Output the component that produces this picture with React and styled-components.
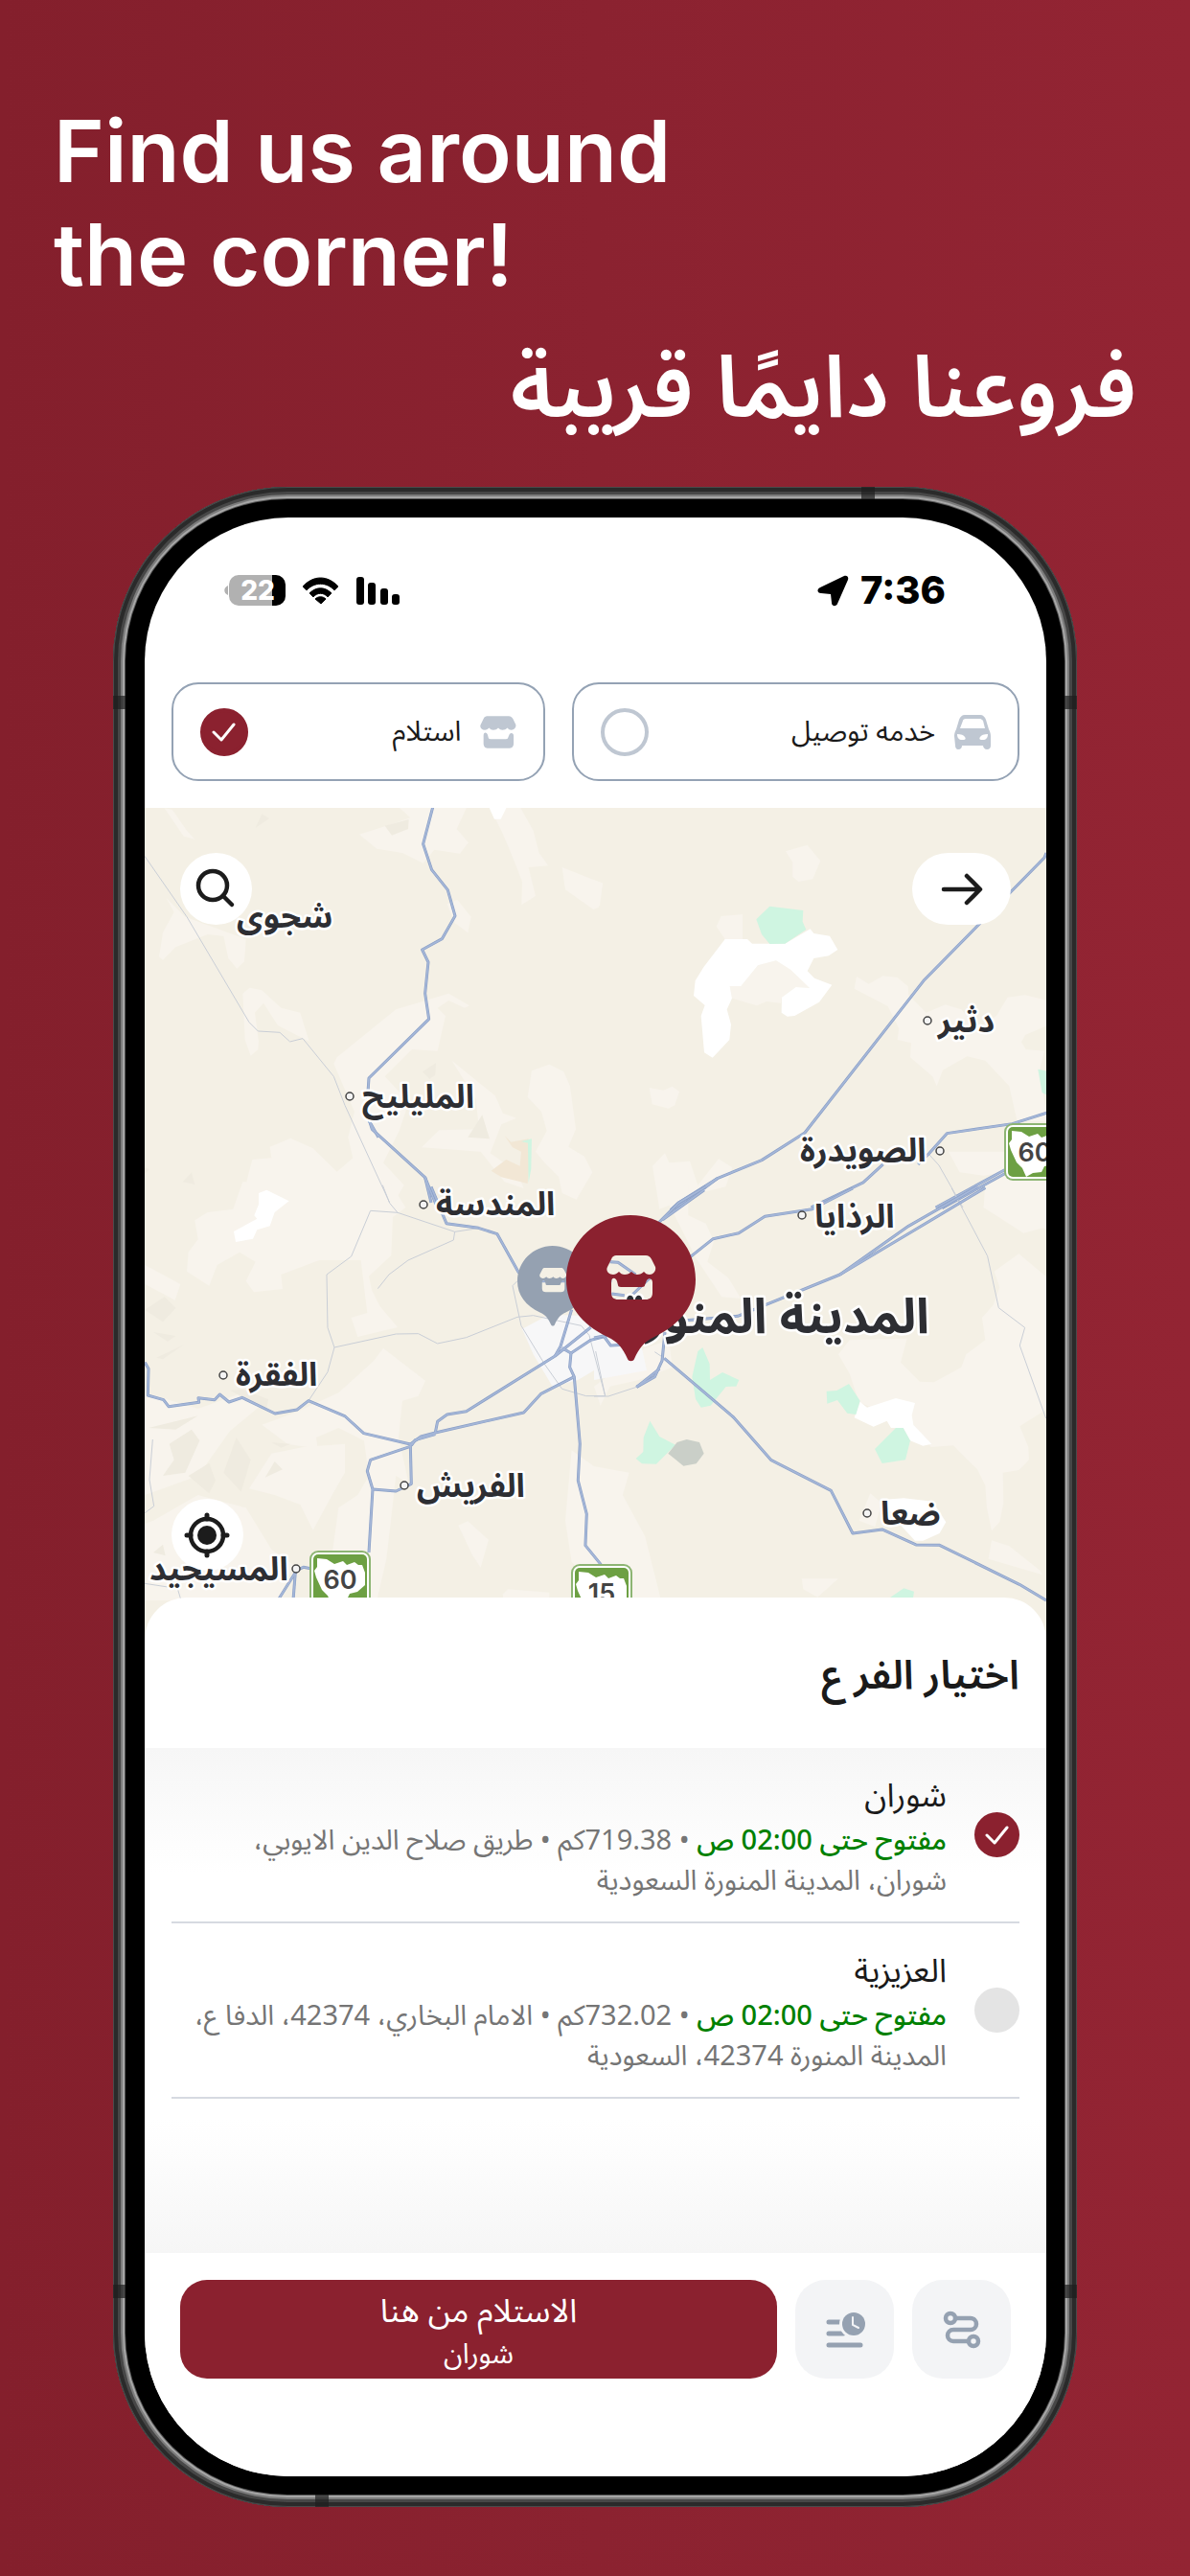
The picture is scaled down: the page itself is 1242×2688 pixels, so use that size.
import React, { useState } from 'react';
import styled, { createGlobalStyle } from 'styled-components';

const arabic = '"Noto Sans Arabic", "Noto Sans", "DejaVu Sans", sans-serif';

const GlobalStyle = createGlobalStyle`
  * {
    box-sizing: border-box;
  }

  body {
    margin: 0;
    background: #8b2230;
  }

  button, input {
    font: inherit;
  }
`;

const BRANCHES = [
  {
    id: 'shoran',
    name: 'شوران',
    open: 'مفتوح حتى 02:00 ص',
    distance: '719.38كم',
    address: 'طريق صلاح الدين الايوبي، شوران، المدينة المنورة السعودية',
  },
  {
    id: 'aziziyah',
    name: 'العزيزية',
    open: 'مفتوح حتى 02:00 ص',
    distance: '732.02كم',
    address: 'الامام البخاري، 42374، الدفا ع، المدينة المنورة 42374، السعودية',
  },
];

// Place names with the left edge of the label and its town dot
const PLACES = [
  { name: 'شجوى', x: 96, y: 125 },
  { name: 'المليليح', x: 227, y: 313, dot: [214, 301] },
  { name: 'المندسة', x: 304, y: 425, dot: [291, 414] },
  { name: 'الفقرة', x: 95, y: 603, dot: [82, 592] },
  { name: 'الفريش', x: 284, y: 719, dot: [271, 707] },
  { name: 'المسيجيد', x: 5, y: 806, dot: [158, 794] },
  { name: 'دثير', x: 828, y: 234, dot: [817, 222] },
  { name: 'الصويدرة', x: 684, y: 369, dot: [830, 358] },
  { name: 'الرذايا', x: 699, y: 438, dot: [686, 425] },
  { name: 'ضعا', x: 768, y: 748, dot: [754, 736] },
];

const SHIELDS = [
  { road: '60', x: 172, y: 775 },
  { road: '15', x: 445, y: 789 },
  { road: '60', x: 897, y: 329 },
];

// The map is kept as four sheets, each at three units to the pixel
const SHEETS = [
  {
    id: 'nw',
    at: '-11 -3',
    sand: [
      '95,10 120,15 165,80 190,107 155,98',
      '820,0 1045,0 1010,75 1047,118 1020,152 940,140 905,182 840,150 760,137 705,92 790,65 865,40',
      '1108,0 1205,0 1250,80 1268,150 1297,190 1235,195 1257,285 1213,313 1215,240 1180,150 1150,80',
      '1340,195 1467,245 1455,320 1438,327 1350,265',
      '100,290 160,350 350,420 345,490 322,512 295,480 280,410 230,405 130,445 90,485 78,475 90,400 125,335',
      '340,590 362,572 400,580 460,635 520,650 548,740 450,690 405,620 378,650 390,740 388,765 365,785 347,735',
      '635,790 820,640 985,590 1050,628 1035,635 985,612 950,635 975,660 950,770 870,765 785,850 860,930 830,1020 780,1120 845,1190 800,1270 400,1265 340,1225 370,1110 430,1105 425,1070 490,1043 560,1075 635,1148 685,1105 670,1040 690,960 625,810',
      '995,800 1130,910 1155,965 1197,980 1150,1000 1115,1090 1200,1150 1220,1200 1160,1180 1085,1085 900,1072 955,1018 1080,1015 1070,920',
      '1245,832 1300,812 1345,835 1365,880 1383,1015 1360,1070 1410,1100 1435,1150 1385,1235 1340,1215 1330,1165 1285,1120 1257,1085 1292,1020 1275,960 1232,915',
      '980,310 1012,296 1055,350 1045,400 1005,370',
    ],
    rock: [
      '380,72 400,28 423,42',
      '785,65 860,45 858,75 807,95',
      '903,835 945,808 943,845 925,858',
      '152,1180 180,1150 190,1188',
      '1045,1040 1090,970 1113,1045',
      '33,1135 48,1140 33,1155',
    ],
    white: ['1108,0 1170,0 1148,44 1128,44'],
    clay: ['1160,1035 1180,1055 1235,1045 1240,1100 1232,1185 1150,1165 1118,1145 1165,1110 1208,1130 1212,1085 1185,1072'],
    green: ['1212,1053 1245,1045 1243,1140 1235,1182 1233,1058'],
    paths: [
      '33,160 165,350 360,680 388,708 456,712 488,741 528,731 625,850 660,940 800,1245',
    ],
    roads: [
      '937,0 905,122 932,203 982,266 1005,347 964,419 902,453 921,492 911,590 923,670 735,855 728,960 745,1015 911,1166 945,1250',
      '728,975 765,1040',
      '911,1166 930,1245',
    ],
  },
  {
    id: 'ne',
    at: '469 -3',
    sand: [
      '600,145 668,125 709,175 685,232 640,240 622,225 622,180',
      '383,380 398,348 465,342 465,420 410,420',
      '432,605 425,567 460,567 513,502 570,487 615,515 675,573 632,570 588,602 585,620 540,615 510,628',
      '815,575 822,537 860,560 905,535 950,540 983,568 985,595 1040,650 1100,625 1150,640 1200,700 1260,660 1295,602 1350,595 1420,612 1420,690 1350,720 1338,742 1352,765 1410,770 1395,830 1420,990 1325,990 1300,880 1225,800 1168,787 1092,830 1073,880 1060,850 990,790 993,745 950,735 955,700 920,630',
      '173,885 217,893 245,881 267,897 253,940 233,950 182,937',
      '183,1130 222,1090 235,1120 300,1115 325,1190 390,1108 433,1135 412,1195 330,1215 205,1265',
      '1110,1085 1290,1085 1283,1150 1220,1160 1145,1150',
      '1230,1190 1420,1090 1420,1330 1220,1260',
      '0,235 27,245 18,315 0,325',
    ],
    rock: [],
    white: [
      '410,420 480,420 495,434 598,434 677,388 688,402 738,410 763,453 735,472 688,480 668,520 690,542 745,563 705,617 628,660 605,662 587,650 588,602 632,570 675,573 615,515 570,487 513,502 460,567 425,567 432,605 416,640 429,687 424,735 371,791 345,775 335,660 347,627 312,597 317,550 343,508',
    ],
    clay: [],
    green: [
      '508,358 550,317 655,330 653,365 664,390 598,434 550,435 525,405',
      '1390,827 1420,833 1420,910 1403,900',
    ],
    paths: ['1050,1095 1080,1128 1155,1260'],
    roads: [
      '1416,150 1410,165 1032,550 660,1026 525,1112 388,1168 265,1245 240,1268',
      '388,1168 290,1240 245,1265',
      '1420,963 1310,998 1105,1028 1050,1090 1015,1125',
      '905,1125 843,1182 680,1260',
      '1290,1140 1070,1260',
      '1290,1152 1090,1262',
    ],
  },
  {
    id: 'sw',
    at: '-11 397',
    sand: [
      '340,-20 800,-20 850,60 810,90 805,210 735,275 745,320 770,370 825,435 700,465 680,405 730,390 710,225 580,225 460,270 465,315 375,325 350,290 380,230 330,200 260,240 235,305 165,260 170,200 200,160 190,100 230,75 310,65',
      '780,500 912,602 890,650 840,665 828,780 860,925 820,900 790,1160 760,1290 600,1290 640,1000 700,960 735,900 720,790 640,750 570,780 575,815 480,800 400,740 510,700 640,640 750,540',
      '360,940 430,830 530,810 660,800 660,890 620,960 560,1070 520,990 440,960',
      '34,1050 60,1040 200,960 350,1000 430,1130 500,1180 450,1290 34,1290',
      '34,240 145,300 128,350 34,300',
      '34,640 200,690 340,640 420,660 300,760 200,900 34,960',
      '1015,1055 1045,1042 1110,1100 1085,1187 1060,1150',
      '1350,1040 1370,820 1440,870 1550,890 1530,960 1600,1090 1650,1290 1490,1290 1370,1170',
      '1155,1270 1170,1255 1300,1265 1300,1290 1155,1290',
    ],
    rock: [
      '34,380 95,340 130,375 90,418 40,385',
      '60,450 130,462 105,480',
      '70,530 155,490 90,535',
      '45,750 200,712 130,755',
      '110,800 180,755 205,790 160,890 90,900 125,850',
      '170,900 235,860 255,915 235,955',
      '320,780 365,850 335,950 280,890',
      '430,795 490,800 460,812',
      '410,905 440,855 465,880',
      '300,632 340,630 420,660 415,690 350,660',
      '60,1140 90,1115 98,1150',
    ],
    white: ['390,15 415,5 485,40 440,75 425,118 385,130 372,158 318,168 312,135 385,95 376,85 390,50'],
    city: ['1215,440 1300,395 1430,400 1520,430 1600,560 1510,595 1440,570 1390,600 1310,620 1250,520'],
    clay: [],
    green: [],
    paths: [
      '778,-10 800,46 825,76 1004,136 1000,162 858,225 798,270 763,314',
      '1004,136 1078,125',
      '825,76 740,70 680,213 603,270 606,436 627,498 606,575 546,665',
      '627,498 820,456 890,455 950,486 1040,467 1200,403 1250,398 1400,430 1425,460 1475,650',
      '1200,290 1185,305 1212,430 1285,550 1340,628 1415,650 1475,650',
      '58,786 48,912 62,995 34,1016',
      '33,1237 105,1248 135,1250 147,1290',
    ],
    roads: [
      '34,545 45,565 43,648 92,662 108,683 203,670 201,656 252,662 268,645 297,669 338,655 441,705 510,693 546,665 661,714 719,767 865,801',
      '930,-5 978,110 1078,124 1137,143 1203,262 1260,290 1495,290',
      '865,801 898,777 943,765 1220,702 1273,644 1378,590',
      '868,805 880,788 943,770',
      '943,765 950,730 980,708 1040,698 1318,525 1430,435',
      '1318,525 1335,495 1370,380',
      '1340,500 1368,516 1430,475 1480,462',
      '1368,516 1364,560 1378,590 1396,800 1390,915 1417,1020 1413,1118 1457,1172 1470,1190',
      '865,801 868,925 820,948 747,942',
      '865,808 740,850 730,885 747,942 735,1140',
      '450,1290 510,1195 530,1186 560,1192',
      '498,1290 505,1200',
    ],
  },
  {
    id: 'se',
    at: '469 397',
    sand: [
      '205,0 295,-10 295,85 350,110 375,165 355,230 420,280 460,345 400,340 320,220 240,60',
      '765,520 800,475 980,470 960,545 1020,605 1065,607 1150,560 1165,520 1225,475 1215,405 1250,365 1270,310 1253,260 1330,205 1420,280 1420,690 1333,745 1360,810 1362,850 1330,882 1280,890 1282,985 1270,1045 1245,1072 1230,1000 1225,930 1200,880 1125,805 1055,810 1000,740 830,670 800,580',
      '1225,-20 1420,-20 1420,120 1345,140 1220,60',
      '1245,1102 1300,1120 1395,1195 1404,1210 1235,1160',
      '650,1222 765,1222 700,1280 655,1255',
      '865,955 900,985 880,1060 830,1040',
      '160,500 235,475 245,560 140,600 50,620 20,680 0,620',
    ],
    rock: [],
    white: [
      '833,668 855,686 945,657 1005,672 995,710 1000,740 1057,800 1030,806 990,790 968,750 930,750 917,728 875,746 815,718',
      '900,975 970,970 1060,980 1102,1045 1082,1080 1030,1103 1005,1103 965,1060',
    ],
    city: ['0,470 100,440 150,500 165,570 0,600'],
    clay: [],
    green: [
      '340,498 362,550 363,600 402,576 454,600 445,620 413,621 365,680 335,686 318,660 307,590 325,510',
      '175,728 205,777 255,803 195,863 150,862 131,846 154,825 155,780',
      '728,635 760,633 798,612 833,665 820,708 793,704 762,663 730,674',
      '945,750 968,750 990,790 975,850 902,861 879,816',
      '928,1290 928,1280 970,1252 1002,1262 998,1290',
    ],
    grey: ['232,830 260,795 290,786 330,795 344,830 320,862 280,869'],
    paths: [
      '1120,0 1232,212 1267,374 1349,436 1333,492 1415,720',
      '190,512 220,532',
      '133,622 45,651 0,651',
      '5,510 35,650',
    ],
    roads: [
      '350,-5 265,45 205,105 150,200',
      '345,5 215,98',
      '810,0 683,65 535,88 453,140 373,158 305,212 170,285 120,333',
      '1200,-5 985,118 770,270 450,400 270,415',
      '1225,-2 995,136 770,270',
      '220,532 437,717 555,851 742,946 810,1080 902,1068 1008,1116 1082,1117 1332,1240 1416,1290',
      '222,450 213,540 190,590 133,622',
      '205,565 133,622',
      '0,468 30,462 52,492 90,490',
      '50,230 75,232 130,270',
      '55,330 95,335',
    ],
  },
];

const storeAwning = 'M10 0h31c3 0 4 1 6 4l4 8c1 4-2 8-6 8-3 0-4-1-6-3-2 2-4 3-7 3-2 0-4-1-6-3-2 2-4 3-7 3s-4-1-6-3c-2 2-4 3-6 3-5 0-8-4-6-8l4-8c1-3 3-4 5-4z';
const storeCounter = 'M5 28c0-6 5-5 6-1l1 4c0 1 1 2 3 2h22c2 0 3-1 3-2l2-5c2-3 6-2 6 2v11c0 5-3 7-7 7H12c-4 0-7-2-7-7z';

const StoreIcon = () => (
  <svg width="38" height="36" viewBox="0 0 52 46" fill="#bfc7d2" aria-hidden="true">
    <path d={storeAwning} />
    <path d={storeCounter} />
  </svg>
);

const CarIcon = () => (
  <svg width="38" height="36" viewBox="0 0 38 36" aria-hidden="true">
    <path
      fill="#bfc7d2"
      fillRule="evenodd"
      d="M11 0h16c3 0 5 2 6 5l3 10c1 2 2 4 2 7v10c0 2-1 4-4 4-2 0-4-2-4-4H8c0 2-1 4-4 4-2 0-3-2-3-4L0 22c0-3 1-5 2-7L5 5c1-3 3-5 6-5zm1 4c-2 0-3 1-3 2L6 14h26l-2-8c-1-1-2-2-3-2zM3 20c0 4 2 6 5 6h2c2 0 2-2 1-3-1-2-4-3-8-3zm32 0c-4 0-7 1-8 3-1 1-1 3 1 3h2c3 0 5-2 5-6z"
    />
  </svg>
);

const CheckIcon = () => (
  <svg width="26" height="20" viewBox="0 0 26 20" fill="none" aria-hidden="true">
    <path d="M2 10l8 8L23 2" stroke="#fff" strokeWidth="3" strokeLinecap="round" strokeLinejoin="round" />
  </svg>
);

const Pin = ({ fill }) => (
  <svg width="100%" viewBox="0 0 135 153" aria-hidden="true">
    <path
      fill={fill}
      fillRule="evenodd"
      d={`M67 0C30 0 0 30 0 67c0 27 16 47 43 60 11 5 16 12 21 23 1 3 6 3 7 0 5-11 10-18 21-23 27-13 43-33 43-60C135 30 104 0 67 0z
        M52 42h31c3 0 4 1 6 4l4 8c1 4-2 8-6 8-3 0-4-1-6-3-2 2-4 3-7 3-2 0-4-1-6-3-2 2-4 3-7 3s-4-1-6-3c-2 2-4 3-6 3-5 0-8-4-6-8l4-8c1-3 3-4 5-4z
        M47 70c0-6 5-5 6-1l1 4c0 1 1 2 3 2h22c2 0 3-1 3-2l2-5c2-3 6-2 6 2v11c0 5-3 7-7 7H54c-4 0-7-2-7-7z`}
    />
  </svg>
);

const shapes = (list, fill) => (list || []).map((points) => (
  <polygon key={points} points={points} fill={fill} />
));

const lines = (list, stroke, width) => list.map((points) => (
  <polyline key={points} points={points} fill="none" stroke={stroke} strokeWidth={width} strokeLinejoin="round" />
));

const Terrain = () => (
  <MapLayer viewBox="0 0 941 884" preserveAspectRatio="xMidYMin slice" aria-hidden="true">
    {SHEETS.map((s) => (
      <g key={s.id} transform={`translate(${s.at}) scale(0.3333)`}>
        {shapes(s.sand, '#f8f4ed')}
        {shapes(s.rock, '#efebe0')}
        {shapes(s.city, '#f7f7f8')}
        {shapes(s.white, '#ffffff')}
        {shapes(s.clay, '#f2e7d5')}
        {shapes(s.green, '#cff5e1')}
        {shapes(s.grey, '#cacfc8')}
      </g>
    ))}
    {SHEETS.map((s) => (
      <g key={s.id} transform={`translate(${s.at}) scale(0.3333)`}>
        {lines(s.paths, '#c9ced6', 3)}
        {lines(s.roads, '#8a9fc6', 9)}
        {lines(s.roads, '#a5b7d8', 5)}
      </g>
    ))}
  </MapLayer>
);

const Labels = () => (
  <MapLayer viewBox="0 0 941 884" preserveAspectRatio="xMidYMin slice">
    {SHIELDS.map((s) => (
      <g key={`${s.x}-${s.y}`} transform={`translate(${s.x} ${s.y})`}>
        <rect width="64" height="60" rx="9" fill="#8db573" />
        <rect x="2" y="2" width="60" height="56" rx="7" fill="#fff" />
        <rect x="4" y="4" width="56" height="52" rx="5" fill="#6da043" />
        <path d="M8 8l10 1 8 5 9-3 4 4 8-3 4 3 4 0 3 8 0 13-8 7-8 2-3 6-9 1-7 4-4-9-6-6-6-13-2-7 3-4z" fill="#fff" />
        <ShieldText x="32" y="40">{s.road}</ShieldText>
      </g>
    ))}
    {PLACES.map((p) => (
      <g key={p.name}>
        {p.dot && <circle cx={p.dot[0]} cy={p.dot[1]} r="4" fill="#f4f4f4" stroke="#444" strokeWidth="1.5" />}
        <PlaceText x={p.x} y={p.y}>{p.name}</PlaceText>
      </g>
    ))}
    <PlaceText x="819" y="548" $city>المدينة المنورة</PlaceText>
  </MapLayer>
);

const StatusIcons = () => (
  <svg width="184" height="34" viewBox="0 0 184 34" aria-hidden="true">
    <path d="M4 12c-5 2-5 8 0 10z" fill="#b1b1b1" />
    <path d="M50 1H15A10 10 0 0 0 5 11v12a10 10 0 0 0 10 10h35z" fill="#b1b1b1" />
    <path d="M50 1h4a10 10 0 0 1 10 10v12a10 10 0 0 1-10 10h-4z" fill="#000" />
    <BatteryText x="35" y="27">22</BatteryText>
    <path d="M82 13c11-12 26-12 37 0l-4 4c-8-9-21-9-29 0z" stroke="#000" strokeLinejoin="round" />
    <path d="M89 20c7-7 16-7 23 0l-4 4c-4-5-11-5-15 0z" stroke="#000" strokeLinejoin="round" />
    <path d="M95 26c3-3 8-3 11 0l-5 5z" stroke="#000" strokeLinejoin="round" />
    <rect x="138" y="3" width="8" height="29" rx="3" />
    <rect x="150" y="9" width="8" height="23" rx="3" />
    <rect x="163" y="15" width="8" height="17" rx="3" />
    <rect x="175" y="21" width="8" height="11" rx="3" />
  </svg>
);

export default function App() {
  const [service, setService] = useState('pickup');
  const [branch, setBranch] = useState('shoran');
  const selected = BRANCHES.find((b) => b.id === branch);

  return (
    <Page>
      <GlobalStyle />
      <Headline>
        Find us around
        <br />
        the corner!
      </Headline>
      <ArabicHeadline dir="rtl" lang="ar">فروعنا دايمًا قريبة</ArabicHeadline>

      <Phone>
        <Band $side="top" />
        <Band $side="left" />
        <Band $side="right" />
        <Band $side="lowerLeft" />
        <Band $side="lowerRight" />
        <Band $side="bottom" />
        <Screen dir="rtl" lang="ar">
          <StatusBar>
            <Clock>
              7:36
              <svg width="33" height="33" viewBox="0 0 33 33" aria-hidden="true">
                <path d="M28 1c3-1 5 1 4 4L21 30c-1 3-6 3-6-1l-1-9-10-1c-4 0-5-4-1-6z" />
              </svg>
            </Clock>
            <StatusIcons />
          </StatusBar>

          <Services>
            <Service $grow={406}>
              <CarIcon />
              <span>خدمه توصيل</span>
              <HiddenRadio
                name="service"
                checked={service === 'delivery'}
                onChange={() => setService('delivery')}
              />
              <ServiceMark $on={service === 'delivery'}>
                {service === 'delivery' && <CheckIcon />}
              </ServiceMark>
            </Service>
            <Service $grow={330}>
              <StoreIcon />
              <span>استلام</span>
              <HiddenRadio
                name="service"
                checked={service === 'pickup'}
                onChange={() => setService('pickup')}
              />
              <ServiceMark $on={service === 'pickup'}>
                {service === 'pickup' && <CheckIcon />}
              </ServiceMark>
            </Service>
          </Services>

          <Map>
            <Terrain />
            <MapButton $place="back" aria-label="رجوع">
              <svg width="44" height="36" viewBox="-1 -1 44 36" fill="none" aria-hidden="true">
                <path d="M2 17h37M26 3l14 14-14 14" stroke="#1c1c1c" strokeWidth="4.5" strokeLinecap="round" strokeLinejoin="round" />
              </svg>
            </MapButton>
            <MapButton $place="search" aria-label="بحث">
              <svg width="44" height="44" viewBox="-2 -2 44 44" fill="none" aria-hidden="true">
                <circle cx="17" cy="16" r="15" stroke="#1c1c1c" strokeWidth="4.5" />
                <path d="M29 28l8 8" stroke="#1c1c1c" strokeWidth="4.5" strokeLinecap="round" />
              </svg>
            </MapButton>
            <MapButton $place="locate" aria-label="موقعي">
              <svg width="48" height="48" viewBox="0 0 48 48" fill="none" aria-hidden="true">
                <circle cx="24" cy="24" r="17" stroke="#1c1c1c" strokeWidth="4.5" />
                <circle cx="24" cy="24" r="10" fill="#1c1c1c" />
                <path d="M24 3v4M24 41v4M3 24h4M41 24h4" stroke="#1c1c1c" strokeWidth="5" strokeLinecap="round" />
              </svg>
            </MapButton>
            <Labels />
            <PinButton $place="small" aria-label="العزيزية" onClick={() => setBranch('aziziyah')}>
              <Pin fill="#95a1b1" />
            </PinButton>
            <PinButton $place="large" aria-label="شوران" onClick={() => setBranch('shoran')}>
              <Pin fill="#8b212f" />
            </PinButton>
          </Map>

          <Sheet>
            <SheetTitle>اختيار الفر ع</SheetTitle>
            <BranchList>
              {BRANCHES.map((b) => (
                <Branch key={b.id}>
                  <HiddenRadio name="branch" checked={branch === b.id} onChange={() => setBranch(b.id)} />
                  <BranchMark $on={branch === b.id}>
                    {branch === b.id && <CheckIcon />}
                  </BranchMark>
                  <BranchText>
                    <BranchName>{b.name}</BranchName>
                    <BranchInfo>
                      <Open>{b.open}</Open>
                      {` • ${b.distance} • ${b.address}`}
                    </BranchInfo>
                  </BranchText>
                </Branch>
              ))}
            </BranchList>
            <Actions>
              <SquareButton aria-label="الطريق">
                <svg width="40" height="40" viewBox="0 0 40 40" fill="none" stroke="#95a1b1" strokeWidth="4.5" aria-hidden="true">
                  <circle cx="8" cy="8" r="5" />
                  <circle cx="32" cy="32" r="5" />
                  <path d="M13 8h16a6 6 0 0 1 0 12H11a6 6 0 0 0 0 12h16" />
                </svg>
              </SquareButton>
              <SquareButton aria-label="جدولة">
                <svg width="42" height="40" viewBox="0 0 42 40" fill="none" aria-hidden="true">
                  <path d="M4 12h11M4 24h15M4 36h33" stroke="#95a1b1" strokeWidth="5" strokeLinecap="round" />
                  <circle cx="30" cy="14" r="15" fill="#f3f4f6" />
                  <circle cx="30" cy="14" r="12" fill="#95a1b1" />
                  <path d="M29 7v8l6 3" stroke="#f3f4f6" strokeWidth="2" strokeLinecap="round" />
                </svg>
              </SquareButton>
              <PickupButton>
                الاستلام من هنا
                <small>{selected.name}</small>
              </PickupButton>
            </Actions>
          </Sheet>
        </Screen>
      </Phone>
    </Page>
  );
}

const Page = styled.main`
  min-height: 100vh;
  padding: 104px 0 72px;
  background: linear-gradient(90deg, #841f2c, #8b2230 50%, #932433);
  color: #fff;
`;

const Headline = styled.h1`
  margin: 0;
  padding: 0 56px;
  font: 600 90px/108px Inter, sans-serif;
`;

const ArabicHeadline = styled.h2`
  margin: 0;
  padding: 16px 56px 4px;
  font: 600 90px/140px ${arabic};
`;

const Phone = styled.section`
  position: relative;
  width: 81%;
  margin: 28px auto 0;
  padding: 32px 32px 32px 33px;
  border-radius: 182px;
  background: #000;
  box-shadow:
    inset 0 0 0 1px #4a4a4a,
    inset 0 0 0 5px #2a2a2a,
    inset 0 0 0 8px #474747,
    inset 0 0 0 10px #7c7c7c,
    inset 0 0 0 12px #a6a6a6,
    inset 0 0 0 13px #555;
`;

const bandPlaces = {
  top: 'top: 0; right: 211px; width: 14px; height: 13px;',
  bottom: 'bottom: 0; left: 211px; width: 14px; height: 13px;',
  left: 'top: 218px; left: 0; width: 13px; height: 14px;',
  right: 'top: 218px; right: 0; width: 13px; height: 14px;',
  lowerLeft: 'bottom: 218px; left: 0; width: 13px; height: 14px;',
  lowerRight: 'bottom: 218px; right: 0; width: 13px; height: 14px;',
};

const Band = styled.i`
  position: absolute;
  background: rgba(30, 30, 30, 0.7);
  ${({ $side }) => bandPlaces[$side]}
`;

const Screen = styled.div`
  overflow: hidden;
  border-radius: 150px;
  background: #fff;
  color: #1a1a1a;
  font-family: ${arabic};
`;

const StatusBar = styled.header`
  display: flex;
  align-items: center;
  justify-content: space-between;
  height: 152px;
  padding: 0 105px 0 83px;
`;

const Clock = styled.div`
  display: flex;
  align-items: center;
  gap: 12px;
  font: 800 40px/48px Inter, sans-serif;
  color: #000;
`;

const BatteryText = styled.text`
  font: 800 28px Inter, sans-serif;
  fill: #fff;
  text-anchor: middle;
  direction: ltr;
`;

const Services = styled.div`
  display: flex;
  gap: 28px;
  padding: 20px 28px 28px;
`;

const Service = styled.label`
  display: flex;
  flex: ${({ $grow }) => $grow} 1 0;
  align-items: center;
  gap: 20px;
  height: 103px;
  padding: 0 28px;
  border: 2px solid #94a2b4;
  border-radius: 28px;
  font-size: 29px;
  line-height: 44px;
  cursor: pointer;
`;

const HiddenRadio = styled.input.attrs({ type: 'radio' })`
  position: absolute;
  opacity: 0;
  pointer-events: none;
`;

const ServiceMark = styled.span`
  display: grid;
  place-items: center;
  width: 50px;
  height: 50px;
  margin-right: auto;
  border: 4px solid ${({ $on }) => ($on ? '#8b212f' : '#bfc7d2')};
  border-radius: 50%;
  background: ${({ $on }) => ($on ? '#8b212f' : '#fff')};
`;

const Map = styled.div`
  position: relative;
  height: 884px;
  overflow: hidden;
  background: #f4f0e5;
`;

const MapLayer = styled.svg`
  position: absolute;
  inset: 0;
  width: 100%;
  height: 100%;
  direction: ltr;
  pointer-events: none;
`;

const PlaceText = styled.text`
  font: 700 ${({ $city }) => ($city ? 51 : 34)}px ${arabic};
  fill: #2d2e33;
  stroke: #fff;
  stroke-width: 5px;
  stroke-linejoin: round;
  paint-order: stroke;
  text-anchor: ${({ $city }) => ($city ? 'end' : 'start')};
`;

const ShieldText = styled.text`
  font: 600 27px Inter, sans-serif;
  fill: #444;
  text-anchor: middle;
`;

const buttonPlaces = {
  back: 'top: 47px; right: 37px; width: 103px;',
  search: 'top: 47px; left: 37px; width: 75px;',
  locate: 'bottom: 88px; left: 28px; width: 75px;',
};

const MapButton = styled.button`
  position: absolute;
  ${({ $place }) => buttonPlaces[$place]}
  display: grid;
  place-items: center;
  height: 75px;
  padding: 0;
  border: 0;
  border-radius: 38px;
  background: #fff;
  cursor: pointer;
`;

const pinPlaces = {
  small: 'top: 457px; left: calc(50% - 81px); width: 74px;',
  large: 'top: 425px; left: calc(50% - 30px); width: 135px;',
};

const PinButton = styled.button`
  position: absolute;
  ${({ $place }) => pinPlaces[$place]}
  padding: 0;
  border: 0;
  background: none;
  cursor: pointer;

  svg {
    display: block;
  }
`;

const Sheet = styled.section`
  position: relative;
  margin-top: -60px;
  border-radius: 44px 44px 0 0;
  background: #fff;
`;

const SheetTitle = styled.h3`
  margin: 0;
  padding: 50px 28px 43px;
  font-size: 42px;
  font-weight: 600;
  line-height: 64px;
`;

const BranchList = styled.div`
  min-height: 527px;
  padding: 0 28px;
  background: linear-gradient(#f6f6f6, #fff 130px, #fff calc(100% - 140px), #f6f6f6);
`;

const Branch = styled.label`
  display: flex;
  align-items: center;
  gap: 29px;
  min-height: 183px;
  border-bottom: 2px solid #d6dae1;
  cursor: pointer;
`;

const BranchMark = styled.span`
  display: grid;
  flex: none;
  place-items: center;
  width: 47px;
  height: 47px;
  border-radius: 50%;
  background: ${({ $on }) => ($on ? '#8b212f' : '#e4e4e4')};
`;

const BranchText = styled.div`
  flex: 1;
  padding: 2px 0 0 16px;
`;

const BranchName = styled.div`
  font-size: 34px;
  line-height: 52px;
`;

const BranchInfo = styled.p`
  margin: 0;
  color: #757575;
  font-size: 29px;
  line-height: 42px;
`;

const Open = styled.span`
  color: #008000;
  font-weight: 500;
`;

const Actions = styled.div`
  display: flex;
  gap: 19px;
  padding: 28px 37px 102px;
`;

const SquareButton = styled.button`
  display: grid;
  place-items: center;
  width: 103px;
  height: 103px;
  padding: 0;
  border: 0;
  border-radius: 32px;
  background: #f3f4f6;
  cursor: pointer;
`;

const PickupButton = styled.button`
  display: flex;
  flex: 1;
  flex-direction: column;
  align-items: center;
  justify-content: center;
  height: 103px;
  padding: 4px 0 0;
  border: 0;
  border-radius: 28px;
  background: #8b212f;
  color: #fff;
  font-size: 34px;
  line-height: 48px;
  cursor: pointer;

  small {
    font-size: 29px;
    line-height: 42px;
  }
`;
